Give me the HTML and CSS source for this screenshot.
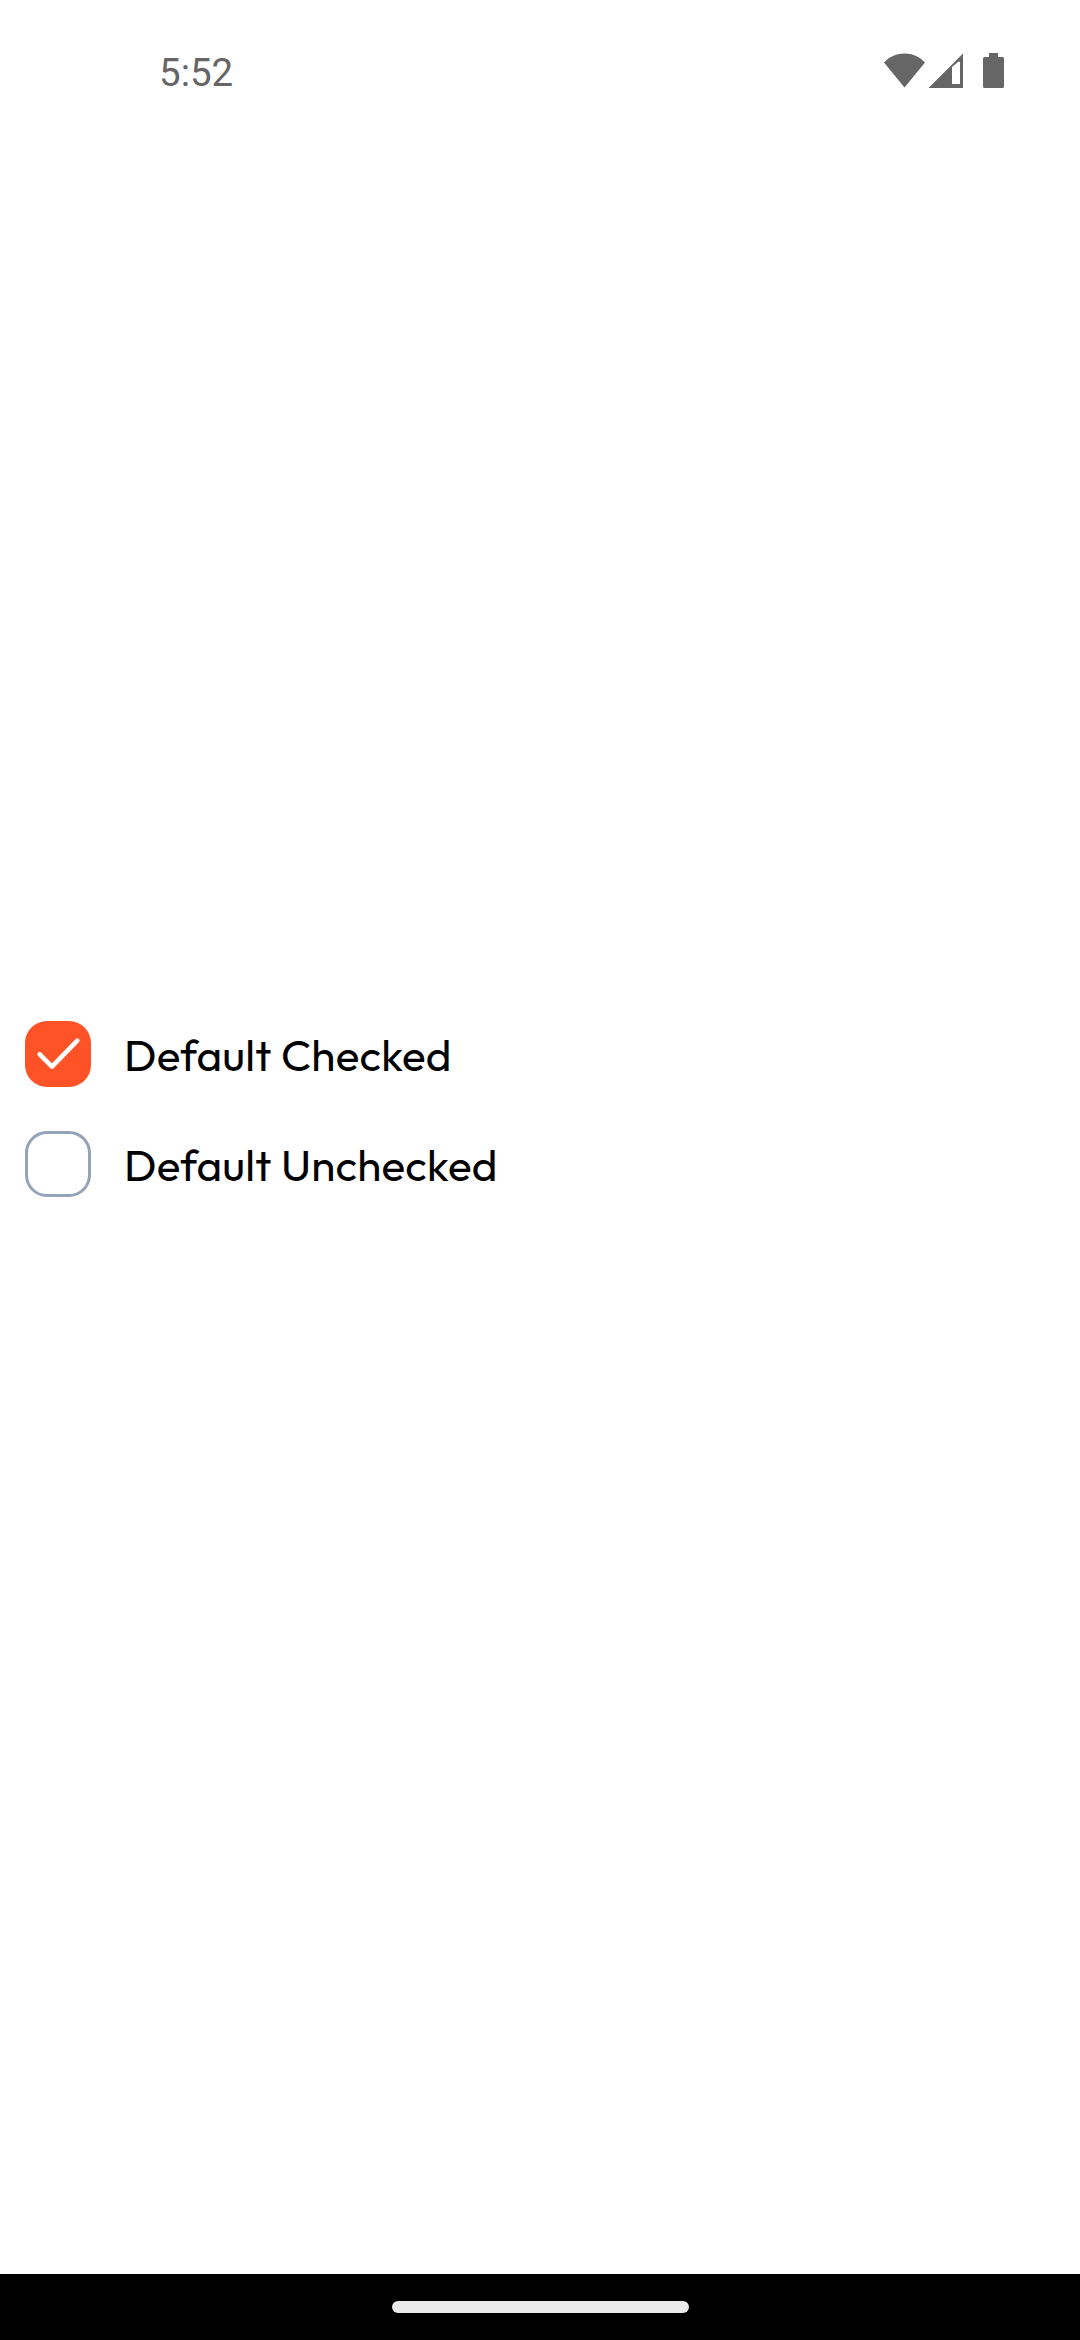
FILE: index.html
```html
<!DOCTYPE html>
<html lang="en">
<head>
<meta charset="utf-8">
<title>Checkboxes</title>
<link rel="stylesheet" href="styles.css">
</head>
<body>
<div class="screen">
  <header class="status">
    <span class="clock">5:52</span>
    <svg class="status-icons" width="121" height="36" viewBox="0 0 121 36" fill="#666">
      <path d="M0 9.5C11-2.5 30-2.5 41 9.500L20.500 34.500Z"/>
      <path fill-rule="evenodd" d="M44.500 35 79 .5V35ZM68 14V31H76V9Q75 8 74 9L68 14Z"/>
      <path d="M105 0H114V4H118.500Q120 4 120 5.500V33.500Q120 35 118.500 35H100.500Q99 35 99 33.500V5.500Q99 4 100.500 4H105Z"/>
    </svg>
  </header>
  <main class="content">
    <label class="option">
      <span class="box box-checked">
        <svg width="66" height="66" viewBox="0 0 66 66" fill="none" stroke="#fff" stroke-width="4.600" stroke-linecap="round" stroke-linejoin="round"><path d="M14.700 33.300 27 45.600 52.300 19.600"/></svg>
      </span>
      <span class="label">Default Checked</span>
    </label>
    <label class="option">
      <span class="box"></span>
      <span class="label">Default Unchecked</span>
    </label>
  </main>
  <footer class="nav"><span class="handle"></span></footer>
</div>
</body>
</html>
```
FILE: styles.css
```css
* { box-sizing: border-box; }
body { margin: 0; background: #fff; }
.screen { width: 1080px; height: 2340px; display: flex; flex-direction: column; }
.status { height: 142px; padding: 48px 75px 0 159px; display: flex; justify-content: space-between; align-items: flex-start; }
.clock { font: 400 38.5px/50px Roboto, sans-serif; color: #666; }
.status-icons { margin-top: 5px; }
.content { flex: 1; display: flex; flex-direction: column; gap: 44px; padding: 879px 25px 0; }
.option { display: flex; align-items: center; gap: 33px; height: 66px; }
.box { width: 66px; height: 66px; flex: none; border: 3px solid #94a3b8; border-radius: 22px; }
.box-checked { border: 0; background: #ff5226; }
.box svg { display: block; }
.label { font: 400 44px/56px Outfit, Lato, sans-serif; color: #000; white-space: nowrap; padding-top: 1px; letter-spacing: 0.2px; }
.nav { height: 66px; background: #000; display: flex; justify-content: center; padding-top: 27px; }
.handle { width: 297px; height: 12px; border-radius: 6px; background: #ebebeb; }
```
